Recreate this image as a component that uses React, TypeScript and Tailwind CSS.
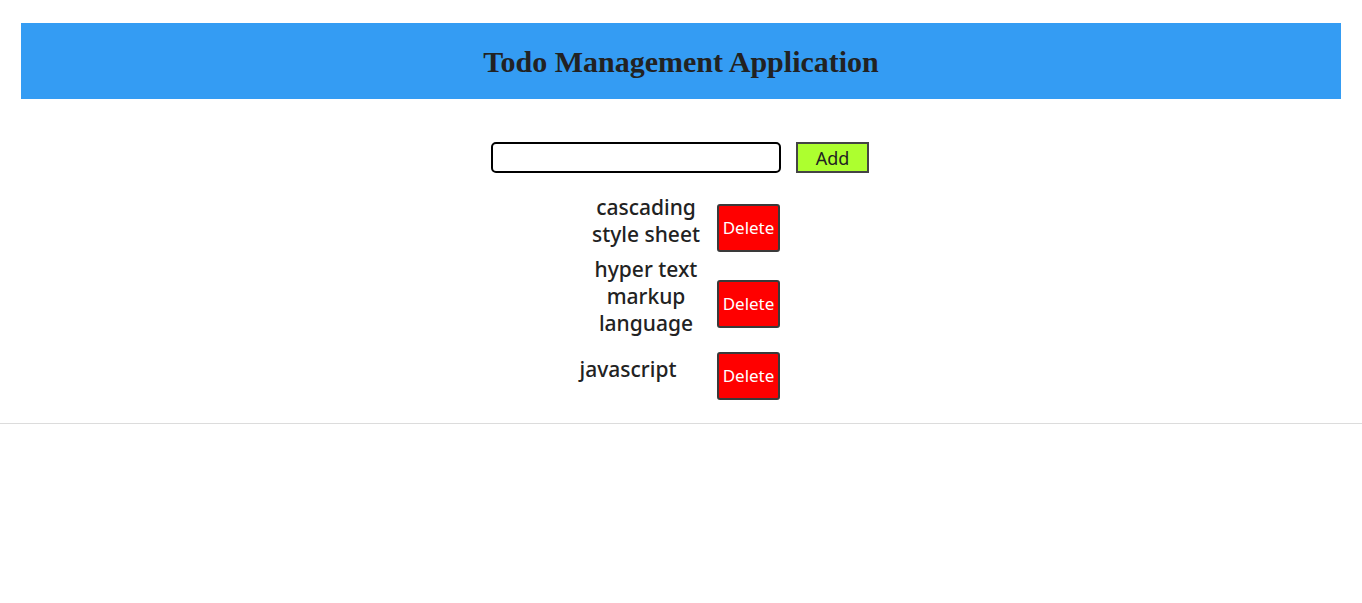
import { useState } from "react";

type Todo = { id: number; lines: string[]; textClass: string; rowClass?: string };

const wrapClass = "w-[120px] ml-[4px] mr-[11px]";

const initialTodos: Todo[] = [
  { id: 1, lines: ["cascading", "style sheet"], textClass: wrapClass },
  { id: 2, lines: ["hyper text", "markup", "language"], textClass: wrapClass, rowClass: "mt-[4px]" },
  { id: 3, lines: ["javascript"], textClass: "w-[100px] ml-[-4px] mr-[39px]", rowClass: "mt-[1px]" },
];

export default function App() {
  const [todos, setTodos] = useState<Todo[]>(initialTodos);
  const [value, setValue] = useState("");

  function handleAdd() {
    if (!value.trim()) return;
    setTodos([...todos, { id: Date.now(), lines: [value.trim()], textClass: wrapClass }]);
    setValue("");
  }

  return (
    <div className="min-h-[603px] bg-white text-[#222]" style={{ fontFamily: '"Noto Sans", "Open Sans", sans-serif' }}>
      <div className="border-b border-[#dcdcdc] px-[21px] pt-[23px] pb-[23px]">
        <header className="flex h-[76px] items-center justify-center bg-[#349cf3]">
          <h1 className="text-[30px] font-bold text-[#222]" style={{ fontFamily: '"Liberation Serif", "Times New Roman", serif' }}>
            Todo Management Application
          </h1>
        </header>

        <div className="mt-[43px] flex items-center justify-center">
          <input
            type="text"
            value={value}
            onChange={(e) => setValue(e.target.value)}
            className="ml-[-2px] h-[31px] w-[290px] rounded-[5px] border-2 border-black px-2 text-base outline-none"
          />
          <button onClick={handleAdd} className="ml-[15px] h-[31px] w-[73px] border-2 border-[#444] bg-[#adff2f] text-[18px] leading-none text-[#222]">
            Add
          </button>
        </div>

        <ul className="mt-[17px] flex flex-col items-center">
          {todos.map((t) => (
            <li key={t.id} className={`flex items-center ${t.rowClass ?? ""}`}>
              <p className={`text-center text-[21px] font-medium leading-[27px] text-[#222] ${t.textClass}`}>
                {t.lines.map((l, i) => (
                  <span key={i} className="block whitespace-nowrap">{l}</span>
                ))}
              </p>
              <button
                onClick={() => setTodos(todos.filter((x) => x.id !== t.id))}
                className="mt-[14px] h-[48px] w-[63px] rounded-[3px] border-2 border-[#3a3a3a] bg-[#ff0000] text-[17px] text-white"
              >
                Delete
              </button>
            </li>
          ))}
        </ul>
      </div>
    </div>
  );
}
